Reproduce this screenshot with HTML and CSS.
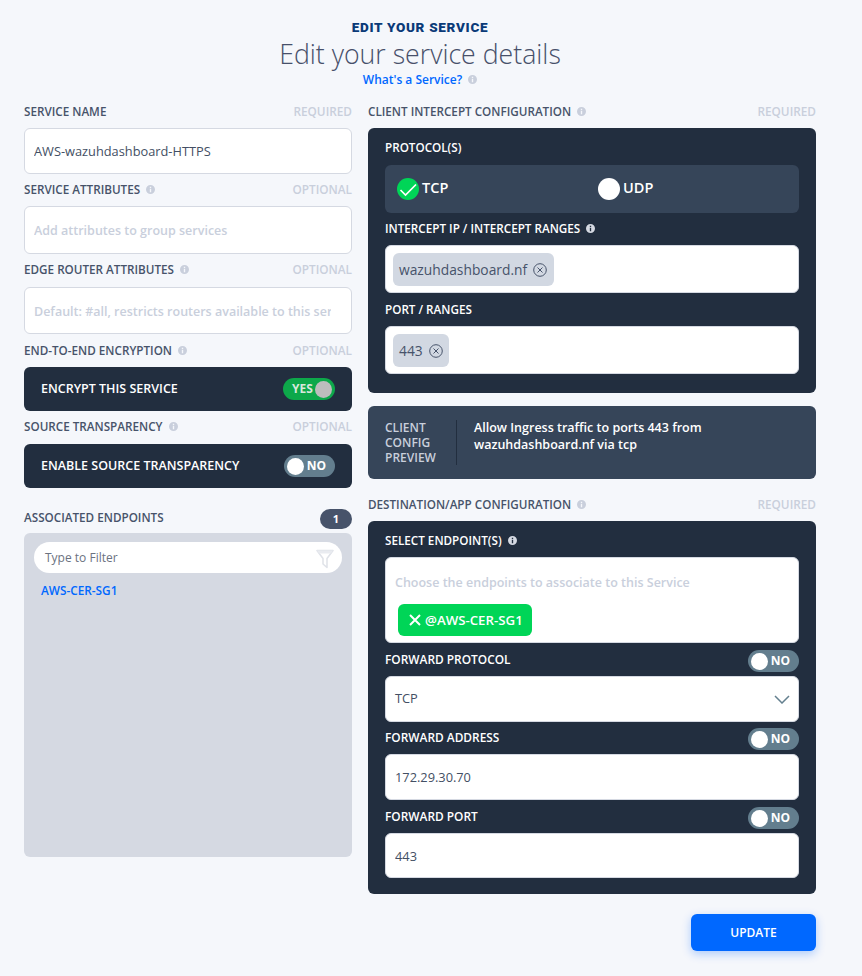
FILE: index.html
```html
<!DOCTYPE html>
<html lang="en">
<head>
<meta charset="utf-8">
<title>Edit your service</title>
<link rel="stylesheet" href="styles.css">
</head>
<body>
<svg class="defs" width="0" height="0" aria-hidden="true">
  <symbol id="info" viewBox="0 0 16 16"><path fill="currentColor" fill-rule="evenodd" d="M8 0a8 8 0 1 1 0 16A8 8 0 0 1 8 0zM6.8 3.2h2.4v2.2H6.8zM6.8 6.8h2.4v6H6.8z"/></symbol>
  <symbol id="xcircle" viewBox="0 0 14 14"><circle cx="7" cy="7" r="6.300" fill="none" stroke="currentColor" stroke-width="1"/><path d="M4.500 4.500l5 5M9.500 4.500l-5 5" fill="none" stroke="currentColor" stroke-width="1"/></symbol>
</svg>
<main class="page">
  <header class="top">
    <div class="eyebrow">EDIT YOUR SERVICE</div>
    <h1 class="title">Edit your service details</h1>
    <div class="help"><a class="help-link">What's a Service?</a><svg class="info"><use href="#info"/></svg></div>
  </header>

  <div class="columns">
    <section class="col col-left">
      <div class="head"><span class="label">Service Name</span><span class="note">Required</span></div>
      <input class="input input-46" value="AWS-wazuhdashboard-HTTPS">

      <div class="head head-gap"><span class="label">Service Attributes<svg class="info"><use href="#info"/></svg></span><span class="note">Optional</span></div>
      <input class="input input-48" placeholder="Add attributes to group services">

      <div class="head head-gap after-9"><span class="label">Edge Router Attributes<svg class="info"><use href="#info"/></svg></span><span class="note">Optional</span></div>
      <input class="input input-47 input-clip" placeholder="Default: #all, restricts routers available to this service">

      <div class="head head-gap-9"><span class="label">End-to-End Encryption<svg class="info"><use href="#info"/></svg></span><span class="note">Optional</span></div>
      <div class="bar">
        <span class="bar-text">Encrypt this service</span>
        <span class="toggle toggle-on"><span class="toggle-text">YES</span><span class="knob"></span></span>
      </div>

      <div class="head head-gap after-9"><span class="label">Source Transparency<svg class="info"><use href="#info"/></svg></span><span class="note">Optional</span></div>
      <div class="bar">
        <span class="bar-text">Enable source transparency</span>
        <span class="toggle"><span class="knob"></span><span class="toggle-text">NO</span></span>
      </div>

      <div class="assoc-head"><span class="label">Associated Endpoints</span><span class="badge">1</span></div>
      <div class="assoc">
        <div class="filter">
          <span class="filter-text">Type to Filter</span>
          <svg class="funnel" viewBox="0 0 18 20"><path d="M1 1.500h16l-6 8v9l-4-3.500V9.500z" fill="none" stroke="#dfe2e8" stroke-width="1.500" stroke-linejoin="round"/><path d="M1 1.500h16l-2 3H3z" fill="#e9ebf0"/></svg>
        </div>
        <a class="assoc-item">AWS-CER-SG1</a>
      </div>
    </section>

    <section class="col col-right">
      <div class="head"><span class="label">Client Intercept Configuration<svg class="info"><use href="#info"/></svg></span><span class="note">Required</span></div>
      <div class="card card-client">
        <div class="card-label card-label-first">Protocol(s)</div>
        <div class="protocols">
          <div class="proto">
            <svg class="check" viewBox="0 0 22 22"><circle cx="11" cy="11" r="11" fill="#00d557"/><path d="M3.500 12l5 5L19 6.500" fill="none" stroke="#fff" stroke-width="1.700"/></svg>
            <span class="proto-text">TCP</span>
          </div>
          <div class="proto"><span class="radio"></span><span class="proto-text">UDP</span></div>
        </div>
        <div class="card-label card-label-a">Intercept IP / Intercept Ranges<svg class="info info-light"><use href="#info"/></svg></div>
        <div class="tagbox"><span class="tag">wazuhdashboard.nf<svg class="tag-x"><use href="#xcircle"/></svg></span></div>
        <div class="card-label card-label-b">Port / Ranges</div>
        <div class="tagbox"><span class="tag">443<svg class="tag-x"><use href="#xcircle"/></svg></span></div>
      </div>

      <div class="preview">
        <div class="preview-label">Client<br>Config<br>Preview</div>
        <div class="preview-text">Allow Ingress traffic to ports 443 from wazuhdashboard.nf via tcp</div>
      </div>

      <div class="head head-dest"><span class="label">Destination/App Configuration<svg class="info"><use href="#info"/></svg></span><span class="note">Required</span></div>
      <div class="card card-dest">
        <div class="card-label">Select Endpoint(s)<svg class="info info-light"><use href="#info"/></svg></div>
        <div class="endpoints">
          <div class="endpoints-placeholder">Choose the endpoints to associate to this Service</div>
          <span class="endpoint-chip"><svg class="chip-x" viewBox="0 0 12 12"><path d="M1 1l10 10M11 1L1 11" fill="none" stroke="#fff" stroke-width="2"/></svg>@AWS-CER-SG1</span>
        </div>
        <div class="row-head row-head-first"><span class="card-label-plain">Forward Protocol</span><span class="toggle"><span class="knob"></span><span class="toggle-text">NO</span></span></div>
        <div class="input select input-46"><span class="select-text">TCP</span><svg class="chevron" viewBox="0 0 16 9"><path d="M1 1l7 7 7-7" fill="none" stroke="#64808f" stroke-width="1.500"/></svg></div>
        <div class="row-head"><span class="card-label-plain">Forward Address</span><span class="toggle"><span class="knob"></span><span class="toggle-text">NO</span></span></div>
        <input class="input input-46" value="172.29.30.70">
        <div class="row-head row-head-last"><span class="card-label-plain">Forward Port</span><span class="toggle"><span class="knob"></span><span class="toggle-text">NO</span></span></div>
        <input class="input input-45" value="443">
      </div>
      <div class="actions"><button class="update">Update</button></div>
    </section>
  </div>
</main>
</body>
</html>
```
FILE: styles.css
```css
* { box-sizing: border-box; }
html, body { margin: 0; padding: 0; }
body {
  background: #f5f7fb;
  font-family: "Open Sans", sans-serif;
  color: #4a5568;
}
.defs { position: absolute; }
.page { padding: 20px 46px 25px 24px; }

.top { height: 84px; text-align: center; }
.eyebrow {
  font-family: "Roboto", sans-serif;
  font-weight: 900;
  font-size: 13.500px;
  line-height: 14px;
  margin-bottom: 2px;
  letter-spacing: 0.7px;
  color: #0a3a78;
}
.title {
  margin: 0;
  font-weight: 300;
  font-size: 26.700px;
  line-height: 36px;
  color: #47506a;
}
.help {
  font-size: 12px;
  font-weight: 600;
  line-height: 16px;
}
.help-link { color: #0068ff; }

.columns { display: grid; grid-template-columns: 328px 448px; column-gap: 16px; }
.col { display: flex; flex-direction: column; min-width: 0; }

.head {
  display: flex;
  justify-content: space-between;
  align-items: center;
  height: 16px;
  margin-bottom: 8px;
}
.head-gap { margin-top: 8px; }
.head-gap-9 { margin-top: 9px; }
.head.after-9 { margin-bottom: 9px; }
.head-dest { margin-top: 18px; }

.label {
  font-size: 11.700px;
  font-weight: 600;
  line-height: 14px;
  text-transform: uppercase;
  color: #47536a;
  display: inline-flex;
  align-items: center;
  margin-bottom: 2px;
}
.note {
  font-size: 11.800px;
  font-weight: 600;
  line-height: 14px;
  text-transform: uppercase;
  color: #c9cfdc;
  margin-bottom: 2px;
}
.info {
  width: 9px;
  height: 9px;
  margin-left: 6px;
  color: #c9cfdc;
  flex: none;
}
.info-light { color: #d5d9e2; }

.input {
  display: block;
  width: 100%;
  border: 1px solid #d5d9e2;
  border-radius: 6px;
  background: #fff;
  padding: 0 9px;
  font-family: "Open Sans", sans-serif;
  font-size: 12.800px;
  font-weight: 500;
  color: #434f64;
  outline: none;
}
.input::placeholder { color: #c9cfdc; opacity: 1; font-size: 12.500px; font-weight: 600; }
.input-45 { height: 45px; }
.input-46 { height: 46px; }
.input-47 { height: 47px; }
.input-48 { height: 48px; }
.input-clip { padding-right: 20px; }
.select { display: flex; align-items: center; justify-content: space-between; }
.select-text { padding-bottom: 2px; }
.chevron { width: 16px; height: 9px; margin-right: -1px; }

.bar {
  height: 44px;
  border-radius: 6px;
  background: #222e3f;
  display: flex;
  align-items: center;
  justify-content: space-between;
  padding: 0 17px;
}
.bar-text {
  font-size: 12.500px;
  font-weight: 600;
  text-transform: uppercase;
  color: #fff;
  padding-bottom: 2px;
}
.toggle {
  width: 51px;
  height: 22px;
  border-radius: 11px;
  background: #637e8e;
  display: inline-flex;
  align-items: center;
  justify-content: space-between;
  padding: 0 9px 0 3px;
  flex: none;
}
.toggle-on { background: #0da84a; padding: 0 3px 0 9px; width: 52px; }
.toggle-on .knob { background: #bdbdbd; }
.toggle-text { font-size: 12px; font-weight: 700; color: #fff; line-height: 1; }
.toggle-on .toggle-text { color: #d7e8dc; }
.knob { width: 17px; height: 17px; border-radius: 50%; background: #fff; }

.assoc-head {
  display: flex;
  justify-content: space-between;
  margin-top: 21px;
  height: 20px;
  margin-bottom: 4px;
}
.assoc-head .label { height: 16px; }
.badge {
  width: 32px;
  height: 20px;
  border-radius: 10px;
  background: #47536a;
  color: #fff;
  font-size: 11px;
  font-weight: 700;
  text-align: center;
  line-height: 20px;
}
.assoc {
  height: 324px;
  background: #d5d9e2;
  border-radius: 6px;
  padding: 9px 10px;
}
.filter {
  height: 31px;
  border-radius: 16px;
  background: #fff;
  display: flex;
  align-items: center;
  justify-content: space-between;
  padding: 0 8px 0 11px;
}
.filter-text { font-size: 12px; font-weight: 500; color: #6b7280; }
.funnel { width: 18px; height: 20px; margin-top: 2px; }
.assoc-item {
  display: block;
  margin: 9px 0 0 7px;
  font-size: 11.800px;
  font-weight: 600;
  line-height: 16px;
  color: #0068ff;
}

.card {
  border-radius: 6px;
  background: #222e3f;
  padding: 12px 17px 0;
}
.card-client { height: 265px; }
.card-dest { height: 373px; }
.card-label {
  font-size: 11.700px;
  font-weight: 600;
  line-height: 14px;
  height: 16px;
  padding-bottom: 2px;
  text-transform: uppercase;
  color: #fff;
  display: flex;
  align-items: center;
  margin-bottom: 8px;
}
.card-label-first { margin-bottom: 9px; }
.card-label-a { margin-top: 8px; }
.card-label-b { margin-top: 9px; }
.protocols {
  height: 48px;
  background: #364559;
  border-radius: 6px;
  display: grid;
  grid-template-columns: 201px 1fr;
  padding: 0 12px;
  align-items: center;
}
.proto {
  display: flex;
  align-items: center;
  gap: 3px;
  font-size: 14.500px;
  font-weight: 600;
  color: #fff;
  height: 22px;
}
.proto-text { margin-top: -3px; }
.check { width: 22px; height: 22px; }
.radio { width: 22px; height: 22px; border-radius: 50%; background: #fff; }
.tagbox {
  height: 48px;
  border: 1px solid #d5d9e2;
  border-radius: 6px;
  background: #fff;
  padding: 7px;
  display: flex;
}
.tag {
  height: 33px;
  padding: 0 6.500px 0 6px;
  border-radius: 6px;
  background: #d2d8e2;
  display: inline-flex;
  align-items: center;
  gap: 6px;
  font-size: 13.800px;
  font-weight: 400;
  color: #47536a;
}
.tag-x { width: 14px; height: 14px; color: #47536a; }

.preview {
  height: 73px;
  margin-top: 13px;
  border-radius: 6px;
  background: #364559;
  display: flex;
  align-items: center;
  padding: 0 17px;
}
.preview-label {
  width: 72px;
  height: 45px;
  border-right: 1px solid #222e3f;
  font-size: 12px;
  font-weight: 600;
  line-height: 15px;
  text-transform: uppercase;
  color: #c9cfdc;
}
.preview-text {
  margin-left: 17px;
  width: 260px;
  font-size: 12.500px;
  font-weight: 600;
  line-height: 17px;
  color: #fff;
  align-self: flex-start;
  margin-top: 13px;
}

.endpoints {
  height: 86px;
  border: 1px solid #d5d9e2;
  border-radius: 6px;
  background: #fff;
  padding: 16px 12px;
}
.endpoints-placeholder {
  font-size: 12.500px;
  font-weight: 600;
  line-height: 18px;
  margin-left: -3px;
  color: #c9cfdc;
}
.endpoint-chip {
  display: inline-flex;
  align-items: center;
  height: 32px;
  margin-top: 12px;
  padding: 0 9px 0 11px;
  gap: 4px;
  border-radius: 6px;
  background: #00d557;
  color: #fff;
  font-size: 13.250px;
  font-weight: 600;
}
.chip-x { width: 12px; height: 12px; }

.row-head {
  display: flex;
  align-items: center;
  justify-content: space-between;
  height: 22px;
  margin-top: 6px;
  margin-bottom: 4px;
}
.row-head-first { margin-top: 7px; }
.row-head-last { margin-top: 7px; }
.card-label-plain {
  font-size: 11.900px;
  font-weight: 600;
  text-transform: uppercase;
  color: #fff;
  padding-bottom: 4px;
}

.actions { display: flex; justify-content: flex-end; margin-top: 20px; }
.update {
  width: 125px;
  height: 37px;
  border: 0;
  border-radius: 6px;
  background: #0068ff;
  box-shadow: 0 3px 10px rgba(0, 104, 255, 0.3);
  color: #fff;
  font-family: "Open Sans", sans-serif;
  font-size: 12px;
  font-weight: 600;
  text-transform: uppercase;
}
```
